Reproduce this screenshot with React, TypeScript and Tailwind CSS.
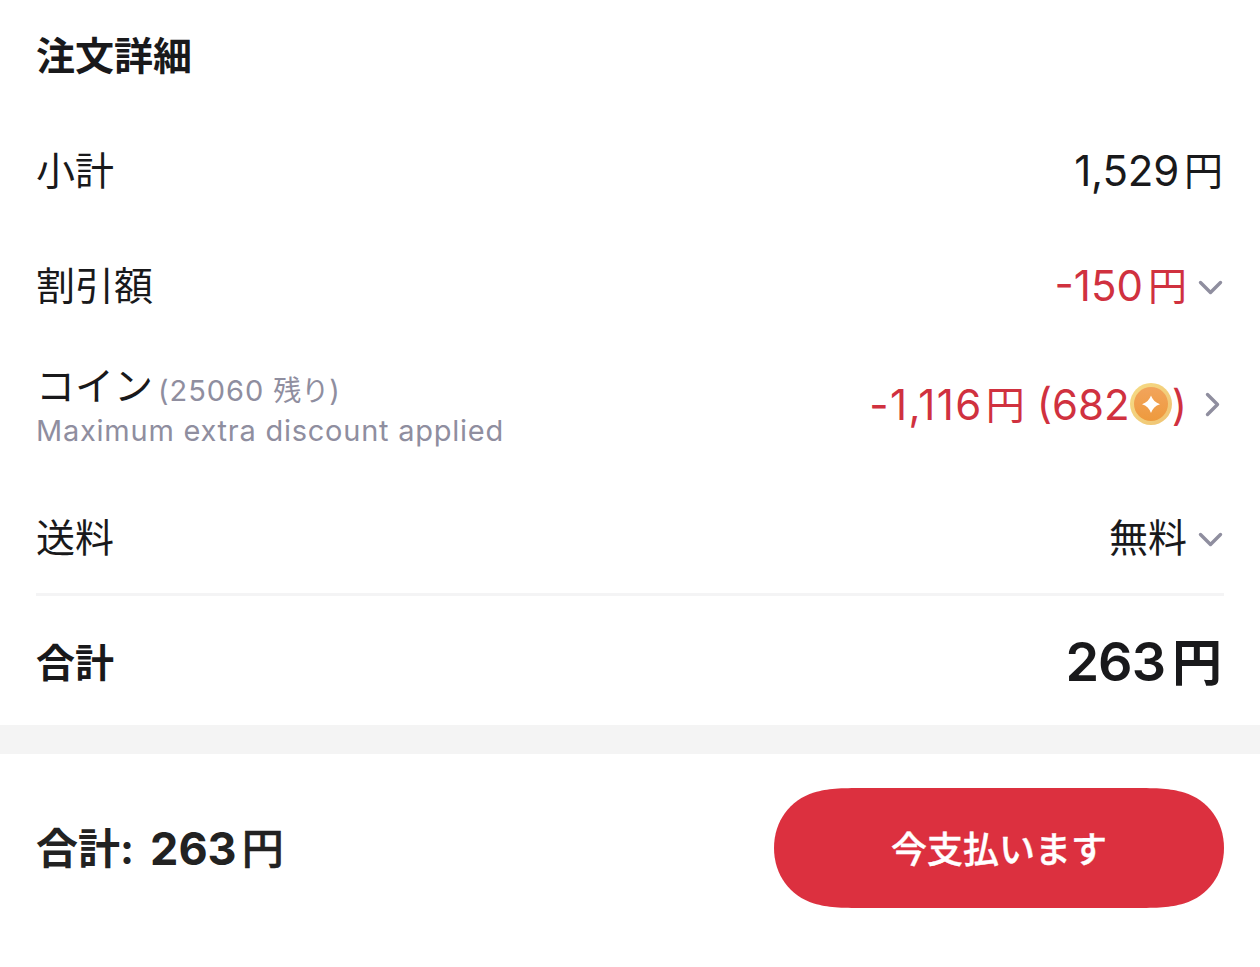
import React from "react";

interface RowProps {
  label: React.ReactNode;
  children: React.ReactNode;
  className?: string;
}

const ChevronDown = () => (
  <svg width="26" height="16" viewBox="0 0 26 16" fill="none" className="mt-[3px]">
    <path
      d="M2.5 3.5L12.5 13.5L22.5 3.5"
      stroke="#8f8e9f"
      strokeWidth="3.4"
      strokeLinecap="round"
      strokeLinejoin="round"
    />
  </svg>
);

const ChevronRight = () => (
  <svg width="20" height="26" viewBox="0 0 20 26" fill="none">
    <path
      d="M3.5 2.5L13.5 12.5L3.5 22.5"
      stroke="#8f8e9f"
      strokeWidth="3.4"
      strokeLinecap="round"
      strokeLinejoin="round"
    />
  </svg>
);

const Coin = () => (
  <svg width="42" height="42" viewBox="0 0 42 42" className="mb-0.5">
    <defs>
      <linearGradient id="rim" x1="0" y1="0" x2="1" y2="1">
        <stop offset="0" stopColor="#f6dc85" />
        <stop offset="1" stopColor="#efc272" />
      </linearGradient>
      <linearGradient id="face" x1="0" y1="0" x2="0" y2="1">
        <stop offset="0" stopColor="#f2a45c" />
        <stop offset="1" stopColor="#ee9a3d" />
      </linearGradient>
    </defs>
    <circle cx="21" cy="21" r="21" fill="url(#rim)" />
    <circle cx="21" cy="21" r="17" fill="url(#face)" />
    <path
      d="M21 12.5Q23.2 19 30 21.2Q23.2 23.4 21 30Q18.8 23.4 12 21.2Q18.8 19 21 12.5Z"
      fill="#fff"
    />
  </svg>
);

const Row = ({ label, children, className = "" }: RowProps) => (
  <div className={`flex items-center justify-between ${className}`}>
    <div className="text-[39px]">{label}</div>
    <div className="flex items-center text-[39px]">{children}</div>
  </div>
);

export default function App() {
  return (
    <div className="h-[967px] w-[1260px] overflow-hidden bg-white font-['Inter','Noto_Sans_CJK_JP',sans-serif] leading-none whitespace-nowrap text-[#19191b]">
      <section className="h-[725px] px-9 pt-[26px]">
        <h2 className="h-[60px] text-[39px] leading-[60px] font-bold">
          注文詳細
        </h2>
        <Row label="小計" className="mt-[54px] h-[60px]">
          <span className="pt-px text-[42px] tracking-[-0.2px]">1,529</span>
          <span className="mr-px ml-[5px]">円</span>
        </Row>
        <Row label="割引額" className="mt-[55px] h-[60px]">
          <span className="pt-px text-[42px] text-[#d0313f]">-150</span>
          <span className="mr-[11px] ml-[5px] text-[#d0313f]">円</span>
          <ChevronDown />
        </Row>
        <Row
          className="mt-[47px] h-[90px]"
          label={
            <>
              <div className="flex h-[47px] items-baseline">
                コイン
                <span className="relative top-px ml-[5px] text-[29px] tracking-[0.95px] text-[#8f8e9f]">
                  (25060 <span className="text-[28px] tracking-normal">残り</span>)
                </span>
              </div>
              <p className="h-[36px] text-[29px] leading-[36px] tracking-[0.75px] text-[#8f8e9f]">
                Maximum extra discount applied
              </p>
            </>
          }
        >
          <div className="flex items-center pb-[5px]">
            <span className="text-[42px] tracking-[1.4px] text-[#d0313f]">
              -1,116
            </span>
            <span className="ml-[3px] text-[#d0313f]">円</span>
            <span className="ml-3 text-[42px] text-[#d0313f]">(682</span>
            <Coin />
            <span className="mr-[17px] text-[42px] text-[#d0313f]">)</span>
            <ChevronRight />
          </div>
        </Row>
        <Row label="送料" className="mt-[55px] h-[60px]">
          <span className="mr-[11px]">無料</span>
          <ChevronDown />
        </Row>
        <div className="mt-[26px] h-[3px] bg-[#f4f4f5]" />
        <Row label="合計" className="mt-[36px] h-[60px] font-bold">
          <span className="text-[54px] font-semibold tracking-[-1px]">
            263
          </span>
          <span className="mr-0.5 ml-[7px] pt-0.5 text-[50px]">円</span>
        </Row>
      </section>
      <div className="h-[29px] bg-[#f4f4f4]" />
      <footer className="flex items-center justify-between px-9 pt-[34px]">
        <div className="flex items-center text-[42px] text-[#222]">
          <span className="pt-0.5 font-bold">合計:</span>
          <span className="ml-4 text-[45px] font-bold">263</span>
          <span className="ml-[5px] pt-px font-medium [-webkit-text-stroke:0.6px_#222]">
            円
          </span>
        </div>
        {/* pill ends ease into the straight edges */}
        <button className="h-[120px] w-[450px] bg-[#dc303f] pt-[3px] text-[36px] font-medium text-white [-webkit-text-stroke:0.4px_white] [clip-path:path('M90_0H360C384_0_396_0.5_410_4.5C434_12_450_33_450_60C450_87_434_108_410_115.5C396_119.5_384_120_360_120H90C66_120_54_119.5_40_115.5C16_108_0_87_0_60C0_33_16_12_40_4.5C54_0.5_66_0_90_0Z')]">
          今支払います
        </button>
      </footer>
    </div>
  );
}
